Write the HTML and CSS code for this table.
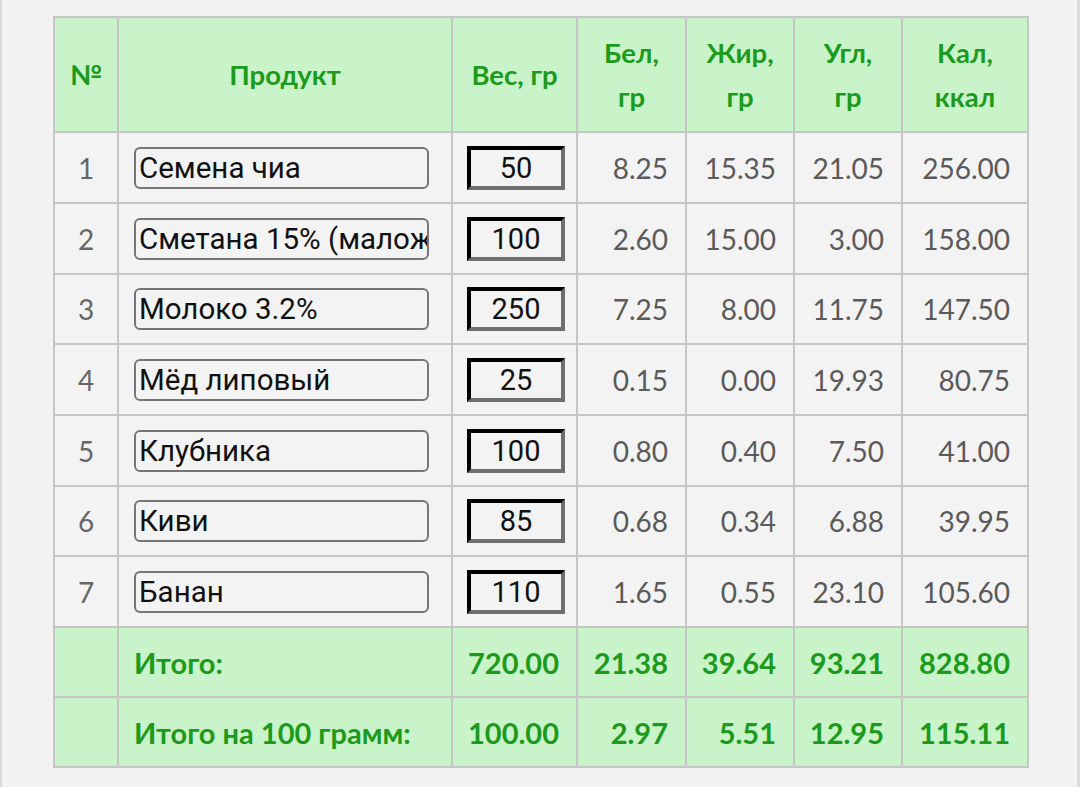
FILE: index.html
```html
<!DOCTYPE html>
<html lang="ru">
<head>
<meta charset="utf-8">
<title>Калькулятор</title>
<link rel="stylesheet" href="styles.css">
</head>
<body>
<div class="page">
  <table class="calc">
    <colgroup>
      <col class="c-num"><col class="c-prod"><col class="c-w"><col class="c-b"><col class="c-f"><col class="c-u"><col class="c-k">
    </colgroup>
    <thead>
      <tr class="head">
        <th>№</th>
        <th>Продукт</th>
        <th>Вес, гр</th>
        <th>Бел,<br>гр</th>
        <th>Жир,<br>гр</th>
        <th>Угл,<br>гр</th>
        <th>Кал,<br>ккал</th>
      </tr>
    </thead>
    <tbody>
      <tr class="row r71"><td class="num">1</td><td class="prod"><input class="pinput" value="Семена чиа"></td><td class="w"><input class="winput" value="50"></td><td class="val">8.25</td><td class="val">15.35</td><td class="val">21.05</td><td class="val">256.00</td></tr>
      <tr class="row r71"><td class="num">2</td><td class="prod"><input class="pinput" value="Сметана 15% (маложирная)"></td><td class="w"><input class="winput" value="100"></td><td class="val">2.60</td><td class="val">15.00</td><td class="val">3.00</td><td class="val">158.00</td></tr>
      <tr class="row r70"><td class="num">3</td><td class="prod"><input class="pinput" value="Молоко 3.2%"></td><td class="w"><input class="winput" value="250"></td><td class="val">7.25</td><td class="val">8.00</td><td class="val">11.75</td><td class="val">147.50</td></tr>
      <tr class="row r71"><td class="num">4</td><td class="prod"><input class="pinput" value="Мёд липовый"></td><td class="w"><input class="winput" value="25"></td><td class="val">0.15</td><td class="val">0.00</td><td class="val">19.93</td><td class="val">80.75</td></tr>
      <tr class="row r71"><td class="num">5</td><td class="prod"><input class="pinput" value="Клубника"></td><td class="w"><input class="winput" value="100"></td><td class="val">0.80</td><td class="val">0.40</td><td class="val">7.50</td><td class="val">41.00</td></tr>
      <tr class="row r70"><td class="num">6</td><td class="prod"><input class="pinput" value="Киви"></td><td class="w"><input class="winput" value="85"></td><td class="val">0.68</td><td class="val">0.34</td><td class="val">6.88</td><td class="val">39.95</td></tr>
      <tr class="row r71"><td class="num">7</td><td class="prod"><input class="pinput" value="Банан"></td><td class="w"><input class="winput" value="110"></td><td class="val">1.65</td><td class="val">0.55</td><td class="val">23.10</td><td class="val">105.60</td></tr>
    </tbody>
    <tfoot>
      <tr class="total r70"><td></td><td class="label">Итого:</td><td class="val">720.00</td><td class="val">21.38</td><td class="val">39.64</td><td class="val">93.21</td><td class="val">828.80</td></tr>
      <tr class="total r70"><td></td><td class="label">Итого на 100 грамм:</td><td class="val">100.00</td><td class="val">2.97</td><td class="val">5.51</td><td class="val">12.95</td><td class="val">115.11</td></tr>
    </tfoot>
  </table>
</div>
</body>
</html>
```

FILE: styles.css
```css
html, body {
  margin: 0;
  padding: 0;
  background: #f1f1f1;
}
.page {
  box-sizing: border-box;
  width: 1080px;
  height: 787px;
  border-left: 2px solid #d9d9d9;
  border-right: 3px solid #dcdcdc;
  padding: 16px 0 0 51px;
  background: #f2f2f2;
}
.calc {
  border-collapse: separate;
  border-spacing: 0;
  table-layout: fixed;
  width: 976px;
  border-top: 2px solid #c6c6c6;
  border-left: 2px solid #c6c6c6;
  font-family: Lato, "Liberation Sans", sans-serif;
}
.c-num { width: 64px; }
.c-prod { width: 334px; }
.c-w { width: 125px; }
.c-b { width: 109px; }
.c-f { width: 108px; }
.c-u { width: 108px; }
.c-k { width: 126px; }
.calc th, .calc td {
  box-sizing: border-box;
  border-right: 2px solid #c6c6c6;
  border-bottom: 2px solid #c6c6c6;
  padding: 0;
  vertical-align: middle;
}
.head th {
  height: 115px;
  background: #c9f4c9;
  color: #1c9a1c;
  font-weight: 700;
  font-size: 27.5px;
  line-height: 44px;
  text-align: center;
}
.r71 td { height: 71px; }
.r70 td { height: 70px; }
.row td { background: #f3f3f3; }
.num {
  text-align: center;
  color: #666;
  font-size: 28px;
}
.val {
  text-align: right;
  padding-right: 17px !important;
  font-size: 28px;
  color: #5a5a5a;
}
.prod { padding-left: 15px !important; }
.w { padding-left: 14px !important; }
.pinput {
  box-sizing: border-box;
  display: block;
  width: 295px;
  height: 42px;
  border: 2px solid #767676;
  border-radius: 6px;
  background: #f3f3f3;
  padding: 0 0 0 3px;
  font-family: Roboto, "Noto Sans", sans-serif;
  font-size: 29.5px;
  color: #111;
  outline: none;
}
.winput {
  box-sizing: border-box;
  display: block;
  width: 98px;
  height: 44px;
  border: 4px inset #888;
  border-top-color: #222;
  border-left-color: #222;
  border-bottom-color: #6e6e6e;
  border-right-color: #6e6e6e;
  background: #f3f3f3;
  padding: 0;
  text-align: center;
  font-family: Roboto, "Noto Sans", sans-serif;
  font-size: 29px;
  color: #111;
  outline: none;
}
.total td {
  background: #c9f4c9;
  color: #1c9a1c;
  font-weight: 700;
  font-size: 29px;
}
.total .val { color: #1c9a1c; }
.total .label {
  padding-left: 15px;
}
```
